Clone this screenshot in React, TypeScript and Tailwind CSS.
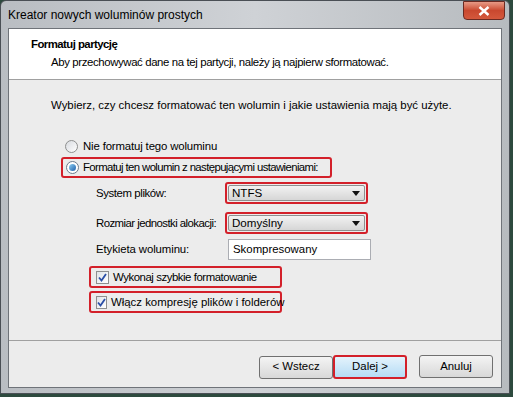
const font = { fontFamily: '"Liberation Sans", Arial, sans-serif' }

function Combo({ value }: { value: string }) {
  return (
    <div className="w-fit rounded-[3px] border-2 border-[#d3202a] p-[1px]">
      <div className="flex h-[16px] w-[137px] items-center justify-between rounded-[2px] border border-[#8e8f8f] bg-gradient-to-b from-[#f2f2f2] to-[#d6d6d6] pl-[3px] pr-[4px]">
        <span className="text-[11.6px] leading-none text-black">{value}</span>
        <svg width="8" height="5" viewBox="0 0 8 5">
          <path d="M0 0 H8 L4 5 Z" fill="#111" />
        </svg>
      </div>
    </div>
  )
}

function Check({ label, track }: { label: string; track: string }) {
  return (
    <div className="flex h-[22px] w-[193px] items-center gap-[4px] rounded-[3px] border-2 border-[#d3202a] pl-[5px]">
      <div className="flex h-[13px] w-[13px] items-center justify-center border border-[#8e8f8f] bg-gradient-to-br from-[#dfe3e8] to-white">
        <svg width="9" height="9" viewBox="0 0 9 9">
          <path d="M1 4.5 L3.5 7.5 L8 1" stroke="#2a4ea6" strokeWidth="1.8" fill="none" />
        </svg>
      </div>
      <span className={`whitespace-nowrap text-[11.4px] text-black ${track}`}>{label}</span>
    </div>
  )
}

function Btn({ label, hi }: { label: string; hi?: boolean }) {
  return (
    <div
      className={
        hi
          ? "flex h-[24px] w-[74px] items-center justify-center rounded-[3px] border-2 border-[#d3202a] bg-gradient-to-b from-[#e4f3fc] to-[#b5dcf5] text-[11.4px] text-black"
          : "flex h-[23px] w-[74px] items-center justify-center rounded-[3px] border border-[#707070] bg-gradient-to-b from-[#f4f4f4] to-[#d8d8d8] text-[11.4px] text-black"
      }
    >
      {label}
    </div>
  )
}

function Row({ label, track, children }: { label: string; track: string; children: React.ReactNode }) {
  return (
    <div className="flex items-center">
      <span className={`w-[129px] whitespace-nowrap text-[11.4px] text-black ${track}`}>{label}</span>
      {children}
    </div>
  )
}

export default function App() {
  return (
    <div className="h-[397px] w-[513px] bg-[#2d4a3e]" style={font}>
      <div className="flex h-[394px] w-[510px] flex-col rounded-t-[6px] border border-[#4a4f55] bg-gradient-to-r from-[#b9bdc2] via-[#cfd2d6] to-[#b7bbbf]">
        {/* title bar */}
        <div className="flex h-[27px] items-start justify-between pl-[7px] pr-[4px]">
          <span className="mt-[5px] text-[12px] text-black">Kreator nowych woluminów prostych</span>
          <div className="flex h-[19px] w-[42px] items-center justify-center rounded-b-[4px] border border-[#6b2a22] bg-gradient-to-b from-[#e79a86] via-[#c9482f] to-[#d4583c]">
            <svg width="12" height="10" viewBox="0 0 12 10">
              <path d="M1.5 1 L10.5 9 M10.5 1 L1.5 9" stroke="white" strokeWidth="2.4" />
            </svg>
          </div>
        </div>
        {/* client */}
        <div className="mx-[7px] flex flex-1 flex-col border border-[#6f7379] bg-[#ececec]">
          <div className="h-[51px] border-b border-[#a0a0a0] bg-white pl-[22px] pt-[7px]">
            <div className="text-[11.4px] font-bold tracking-[-0.55px] text-black">Formatuj partycję</div>
            <div className="mt-[1px] whitespace-nowrap pl-[20px] text-[11.4px] tracking-[-0.38px] text-black">
              Aby przechowywać dane na tej partycji, należy ją najpierw sformatować.
            </div>
          </div>
          <div className="flex flex-1 flex-col pl-[42px] pt-[17px]">
            <div className="whitespace-nowrap text-[11.4px] text-black">
              Wybierz, czy chcesz formatować ten wolumin i jakie ustawienia mają być użyte.
            </div>
            <div className="mt-[22px] flex h-[20px] items-center gap-[5px] pl-[14px]">
              <div className="h-[13px] w-[13px] rounded-full border border-[#8e8f8f] bg-gradient-to-br from-[#d8dbe0] to-white" />
              <span className="text-[11.4px] tracking-[-0.15px] text-black">Nie formatuj tego woluminu</span>
            </div>
            <div className="ml-[10px] mt-[1px] flex h-[21px] w-[271px] items-center gap-[4px] rounded-[3px] border-2 border-[#d3202a] pl-[3px]">
              <div className="flex h-[13px] w-[13px] items-center justify-center rounded-full border border-[#6b7a8c] bg-white">
                <div className="h-[7px] w-[7px] rounded-full bg-gradient-to-br from-[#8fd0f4] to-[#1f5fa8]" />
              </div>
              <span className="whitespace-nowrap text-[11.4px] tracking-[-0.62px] text-black">
                Formatuj ten wolumin z następującymi ustawieniami:
              </span>
            </div>
            <div className="mt-[1px] flex flex-col pl-[45px]">
              <div className="mt-[3px]">
                <Row label="System plików:" track="tracking-[-0.4px]">
                  <Combo value="NTFS" />
                </Row>
              </div>
              <div className="mt-[8px]">
                <Row label="Rozmiar jednostki alokacji:" track="tracking-[-0.55px]">
                  <Combo value="Domyślny" />
                </Row>
              </div>
              <div className="mt-[5px]">
                <Row label="Etykieta woluminu:" track="tracking-[-0.1px]">
                  <div className="ml-[3px] flex h-[21px] w-[143px] items-center border border-[#abadb3] bg-white pl-[4px] text-[11.4px] text-black">
                    Skompresowany
                  </div>
                </Row>
              </div>
            </div>
            <div className="mt-[6px] flex flex-col gap-[3px] pl-[38px]">
              <Check label="Wykonaj szybkie formatowanie" track="tracking-[-0.45px]" />
              <Check label="Włącz kompresję plików i folderów" track="tracking-[0px]" />
            </div>
          </div>
          <div className="flex h-[47px] items-start justify-end gap-[12px] border-t border-[#a0a0a0] pr-[8px] pt-[14px]">
            <div className="flex items-center">
              <Btn label="< Wstecz" />
              <Btn label="Dalej >" hi />
            </div>
            <Btn label="Anuluj" />
          </div>
        </div>
        <div className="h-[5px]" />
      </div>
    </div>
  )
}
